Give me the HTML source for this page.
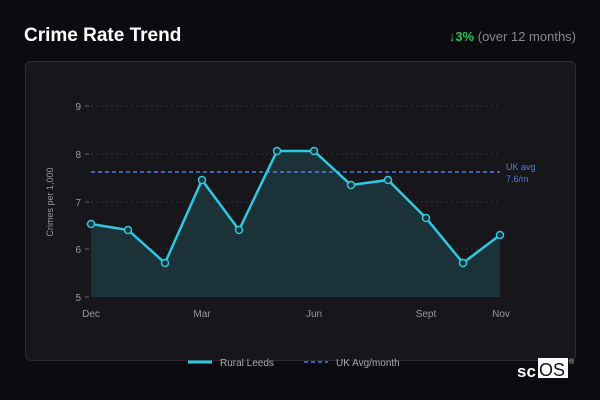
<!DOCTYPE html><html><head><style>
body{margin:0;width:600px;height:400px;background:#0c0c10;font-family:"Liberation Sans",sans-serif;position:relative;overflow:hidden}
.t{position:absolute;left:24px;top:25px;color:#fff;font-weight:bold;font-size:19px}
.r{position:absolute;right:24px;top:29px;color:#888;font-size:13px}
.r b{color:#2fbf5a}
.card{position:absolute;left:25px;top:61px;width:549px;height:298px;background:#17171b;border:1px solid #2c2c32;border-radius:6px}
</style></head><body>
<div class="t">Crime Rate Trend</div>
<div class="r"><b>↓3%</b> (over 12 months)</div>
<div class="card"></div>
<svg width="600" height="400" style="position:absolute;left:0;top:0" font-family="Liberation Sans" font-size="10" fill="#999">
<g stroke="#333" stroke-dasharray="2,3"><line x1="91" y1="106" x2="500" y2="106"/><line x1="91" y1="154" x2="500" y2="154"/><line x1="91" y1="202" x2="500" y2="202"/><line x1="91" y1="249" x2="500" y2="249"/></g>
<g stroke="#666"><line x1="85" y1="106" x2="89" y2="106"/><line x1="85" y1="154" x2="89" y2="154"/><line x1="85" y1="202" x2="89" y2="202"/><line x1="85" y1="249" x2="89" y2="249"/><line x1="85" y1="297" x2="89" y2="297"/></g>
<g text-anchor="end"><text x="81" y="110">9</text><text x="81" y="158">8</text><text x="81" y="206">7</text><text x="81" y="253">6</text><text x="81" y="301">5</text></g>
<text transform="translate(53,202) rotate(-90)" text-anchor="middle" font-size="9">Crimes per 1,000</text>
<polygon fill="#1a3238" points="91,224 128,230 165,263 202,180 239,230 277,151 314,151 351,185 388,180 426,218 463,263 500,235 500,297 91,297"/>
<line x1="91" y1="172" x2="500" y2="172" stroke="#4a7fe0" stroke-width="1.5" stroke-dasharray="4,3"/>
<polyline fill="none" stroke="#2ec8e0" stroke-width="2.5" points="91,224 128,230 165,263 202,180 239,230 277,151 314,151 351,185 388,180 426,218 463,263 500,235"/>
<g fill="#1a3238" stroke="#2ec8e0" stroke-width="1.5"><circle cx="91" cy="224" r="3.5"/><circle cx="128" cy="230" r="3.5"/><circle cx="165" cy="263" r="3.5"/><circle cx="202" cy="180" r="3.5"/><circle cx="239" cy="230" r="3.5"/><circle cx="277" cy="151" r="3.5"/><circle cx="314" cy="151" r="3.5"/><circle cx="351" cy="185" r="3.5"/><circle cx="388" cy="180" r="3.5"/><circle cx="426" cy="218" r="3.5"/><circle cx="463" cy="263" r="3.5"/><circle cx="500" cy="235" r="3.5"/></g>
<text x="506" y="170" fill="#4a7fe0" font-size="9">UK avg</text><text x="506" y="182" fill="#4a7fe0" font-size="9">7.6/m</text>
<g text-anchor="middle"><text x="91" y="317">Dec</text><text x="202" y="317">Mar</text><text x="314" y="317">Jun</text><text x="426" y="317">Sept</text><text x="501" y="317">Nov</text></g>
<line x1="188" y1="362" x2="212" y2="362" stroke="#2ec8e0" stroke-width="3"/>
<text x="220" y="366" fill="#aaa">Rural Leeds</text>
<line x1="304" y1="362" x2="328" y2="362" stroke="#4a7fe0" stroke-width="1.5" stroke-dasharray="4,3"/>
<text x="336" y="366" fill="#aaa">UK Avg/month</text>
<text x="517" y="377" fill="#fff" font-size="17" font-weight="bold">sc</text>
<rect x="538" y="358" width="30" height="20" fill="#fff"/>
<text x="539" y="376" fill="#111" font-size="18">OS</text>
<text x="569" y="364" fill="#ccc" font-size="7">®</text>
</svg>
</body></html>
